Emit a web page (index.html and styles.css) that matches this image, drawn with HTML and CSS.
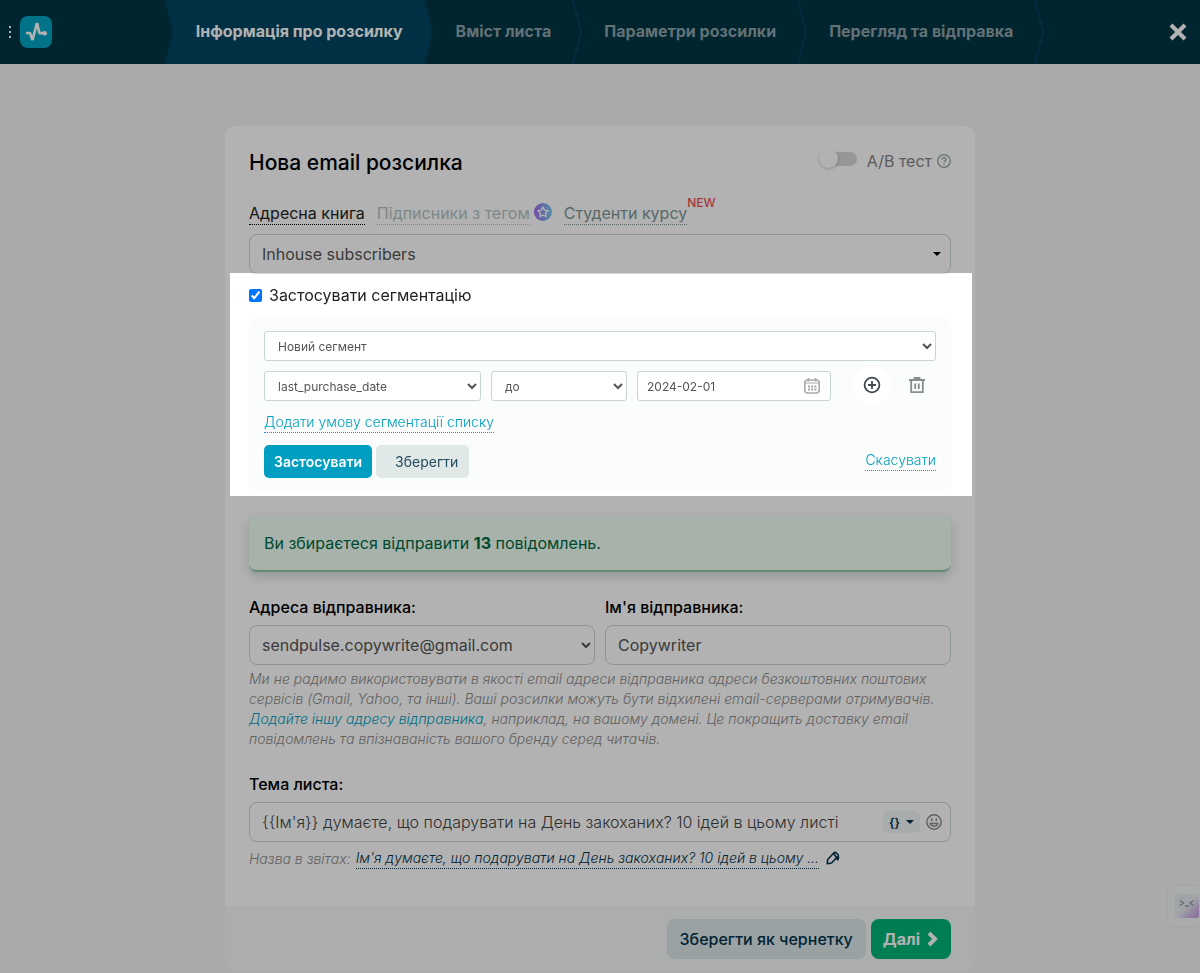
FILE: index.html
```html
<!DOCTYPE html>
<html lang="uk">
  <head>
    <meta charset="UTF-8" />
    <meta name="viewport" content="width=device-width, initial-scale=1.0" />
    <title>Нова email розсилка</title>
    <link rel="stylesheet" href="styles.css" />
  </head>
  <body>
    <header class="header">
      <div class="brand">
        <button class="dots" type="button" aria-label="Меню"><i></i><i></i><i></i></button>
        <a class="logo" href="#" aria-label="SendPulse">
          <svg width="32" height="32" viewBox="0 0 32 32" fill="none">
            <path d="M6 17h4l2.500 7 4.500-17 2.500 10.200h5" stroke="#fff" stroke-width="2.700" stroke-linejoin="bevel" />
            <circle cx="24.700" cy="17.200" r="2.300" fill="#fff" />
          </svg>
        </a>
      </div>
      <nav class="steps">
        <a class="step active" href="#">Інформація про розсилку</a>
        <a class="step" href="#">Вміст листа
          <svg class="arrow" viewBox="0 0 10 64" preserveAspectRatio="none"><path d="M1 0l8 32-8 32" /></svg></a>
        <a class="step" href="#">Параметри розсилки
          <svg class="arrow" viewBox="0 0 10 64" preserveAspectRatio="none"><path d="M1 0l8 32-8 32" /></svg></a>
        <a class="step" href="#">Перегляд та відправка
          <svg class="arrow" viewBox="0 0 10 64" preserveAspectRatio="none"><path d="M1 0l8 32-8 32" /></svg></a>
      </nav>
      <button class="close" type="button" aria-label="Закрити">
        <svg width="18" height="18" viewBox="0 0 18 18"><path d="M2 2l14 14M16 2L2 16" stroke="#fff" stroke-width="4.200" /></svg>
      </button>
    </header>

    <form class="card">
      <div class="content">
        <div class="top">
          <h1>Нова email розсилка</h1>
          <div class="ab">
            <input class="switch" type="checkbox" id="ab" />
            <label for="ab">A/B тест</label>
            <svg width="14" height="14" viewBox="0 0 14 14" fill="none" stroke="#97a3a3" stroke-width="1.300">
              <circle cx="7" cy="7" r="6.300" />
              <path d="M5 5.600c0-2.600 4-2.400 4-.2C9 6.900 7 6.800 7 8.300M7 9.400v1.400" />
            </svg>
          </div>
        </div>

        <div class="tabs">
          <a class="tab current" href="#">Адресна книга</a>
          <span class="tag-tab">
            <a class="tab disabled" href="#">Підписники з тегом</a>
            <svg width="18" height="18" viewBox="0 0 18 18">
              <defs>
                <linearGradient id="star"><stop stop-color="#a06cf0" /><stop offset="1" stop-color="#7ccbee" /></linearGradient>
              </defs>
              <circle cx="9" cy="9" r="9" fill="url(#star)" />
              <path d="M9 4l1.500 3.200 3.500.5-2.500 2.500.6 3.500L9 12l-3.100 1.700.6-3.500L4 7.700l3.500-.5z" fill="none" stroke="#fff" stroke-width="1.300" stroke-linejoin="round" />
            </svg>
          </span>
          <span class="course-tab"><a class="tab" href="#">Студенти курсу</a><sup class="new">NEW</sup></span>
        </div>

        <button class="field dropdown" type="button">Inhouse subscribers <span class="caret"></span></button>

        <section class="spotlight">
          <div class="check">
            <input type="checkbox" id="seg" checked />
            <label for="seg">Застосувати сегментацію</label>
          </div>
          <div class="segment">
            <select class="small" aria-label="Сегмент"><option>Новий сегмент</option></select>
            <div class="rule">
              <select class="small" aria-label="Змінна"><option>last_purchase_date</option></select>
              <select class="small" aria-label="Умова"><option>до</option></select>
              <div class="date">
                <input type="text" value="2024-02-01" aria-label="Дата" />
                <svg width="16" height="16" viewBox="0 0 16 16" fill="none" stroke="#aaa">
                  <rect x=".8" y="2" width="14.400" height="13" rx="3" stroke-width="1.600" />
                  <path d="M1 5h14" stroke-width="1" />
                  <path d="M4.500 0v3.500M11.500 0v3.500" stroke-width="1.600" />
                  <path d="M4 8.500h8.500M4 11.500h8.500" stroke-width="2" stroke-dasharray="2 1.200" />
                </svg>
              </div>
              <div class="actions">
                <button class="round" type="button" aria-label="Додати">
                  <svg width="18" height="18" viewBox="0 0 18 18" fill="none" stroke="#3d4b50" stroke-width="1.800">
                    <circle cx="9" cy="9" r="7.400" /><path d="M9 5v8M5 9h8" />
                  </svg>
                </button>
                <button class="round trash" type="button" aria-label="Видалити">
                  <svg width="16" height="16" viewBox="0 0 16 16" fill="none" stroke="#858f90" stroke-width="1.800">
                    <path d="M0 3h16M5.500 3V1h5v2M2.200 3v12.100h11.600V3M6.200 6.500v5.500M9.800 6.500v5.500" />
                  </svg>
                </button>
              </div>
            </div>
            <a class="link add" href="#">Додати умову сегментації списку</a>
            <div class="segment-buttons">
              <button class="apply" type="button">Застосувати</button>
              <button class="save" type="button">Зберегти</button>
              <a class="link cancel" href="#">Скасувати</a>
            </div>
          </div>
        </section>

        <div class="alert">Ви збираєтеся відправити <b>13</b> повідомлень.</div>

        <div class="sender">
          <div>
            <label class="title" for="email">Адреса відправника:</label>
            <select class="field" id="email"><option>sendpulse.copywrite@gmail.com</option></select>
          </div>
          <div>
            <label class="title" for="name">Ім'я відправника:</label>
            <input class="field" type="text" id="name" value="Copywriter" />
          </div>
        </div>
        <p class="help">
          Ми не радимо використовувати в якості email адреси відправника адреси безкоштовних поштових<br />
          сервісів (Gmail, Yahoo, та інші). Ваші розсилки можуть бути відхилені email-серверами отримувачів.<br />
          <a href="#">Додайте іншу адресу відправника</a>, наприклад, на вашому домені. Це покращить доставку email<br />
          повідомлень та впізнаваність вашого бренду серед читачів.
        </p>

        <div class="subject">
          <label class="title" for="subject">Тема листа:</label>
          <div class="field subject-box">
            <input type="text" id="subject" value="{{Ім'я}} думаєте, що подарувати на День закоханих? 10 ідей в цьому листі" />
            <button class="vars" type="button">{} <span class="caret"></span></button>
            <button class="emoji" type="button" aria-label="Емодзі">
              <svg width="16" height="16" viewBox="0 0 16 16" fill="none" stroke="#8a8a8a" stroke-width="1.400">
                <circle cx="8" cy="8" r="7.200" />
                <path d="M5.700 4.200v3M10.300 4.200v3M4.200 9.500h7.600c-.6 3.600-7 3.600-7.600 0z" />
              </svg>
            </button>
          </div>
        </div>
        <div class="report">
          <span>Назва в звітах:</span>
          <a href="#">Ім'я думаєте, що подарувати на День закоханих? 10 ідей в цьому ...</a>
          <svg width="14" height="14" viewBox="0 0 14 14" fill="none" stroke="#00344d" stroke-width="1.600" stroke-linejoin="round">
            <path d="M1.200 12.800l.5-4.300L8 1.800c1.300-1.300 5.300 2 4 3.600L5.500 12zM7.800 2.500l4 6.300 1-3" />
          </svg>
        </div>
      </div>

      <footer class="footer">
        <button class="draft" type="button">Зберегти як чернетку</button>
        <button class="next" type="submit">Далі
          <svg width="12" height="16" viewBox="0 0 12 16"><path d="M2 2l6 6-6 6" fill="none" stroke="#fff" stroke-width="4" /></svg>
        </button>
      </footer>
    </form>

    <button class="chat" type="button" aria-label="Чат">
      <svg width="24" height="24" viewBox="0 0 24 24">
        <defs>
          <linearGradient id="chat" x2="1" y2="1"><stop offset=".5" stop-color="#e6eaf0" /><stop offset="1" stop-color="#c093e0" /></linearGradient>
        </defs>
        <rect width="24" height="24" rx="3" fill="url(#chat)" />
        <path d="M5 6.500l3.500 2.500L5 11.500M18.500 6.500L15 9l3.500 2.500M10 12h4" fill="none" stroke="#929aa5" stroke-width="1.500" />
      </svg>
    </button>
  </body>
</html>
```

FILE: styles.css
```css
* {
  box-sizing: border-box;
  margin: 0;
  padding: 0;
}

body {
  min-height: 100vh;
  background-color: #f1f5f4;
  font-family: Inter, "Noto Sans", sans-serif;
  font-size: 16px;
  line-height: 24px;
  color: #000;
}

button,
input,
select {
  font-family: inherit;
}

button {
  border: none;
  background: none;
  cursor: pointer;
}

a {
  color: #009fc1;
  text-decoration: none;
}

svg {
  flex-shrink: 0;
}

/* header */
.header {
  display: grid;
  grid-template-columns: 1fr auto 1fr;
  align-items: center;
  height: 64px;
  background-color: #003543;
}

.brand {
  display: flex;
  align-items: center;
  padding-left: 8px;
  gap: 8px;
}

.dots {
  display: flex;
  flex-direction: column;
  align-items: center;
  gap: 3px;
  width: 4px;
}

.dots i {
  width: 2px;
  height: 2px;
  background-color: #fff;
}

.logo {
  display: flex;
  border-radius: 8px;
  background-color: #00a5c4;
}

.steps {
  display: flex;
  height: 64px;
}

.step {
  position: relative;
  display: flex;
  align-items: center;
  padding: 0 22px 2px 31px;
  font-weight: 700;
  color: #8fa3aa;
}

.step.active {
  margin-right: -8px;
  padding-right: 30px;
  background-color: #004561;
  color: #fff;
  clip-path: polygon(0 0, calc(100% - 8px) 0, 100% 50%, calc(100% - 8px) 100%, 0 100%, 8px 50%);
}

.arrow {
  position: absolute;
  top: 0;
  right: -9px;
  width: 10px;
  height: 100%;
  fill: none;
  stroke: #004561;
  stroke-width: 1.5;
}

.close {
  display: flex;
  justify-self: end;
  margin-right: 13px;
}

/* card */
.card {
  width: 100%;
  max-width: 750px;
  margin: 62px auto 0;
  border-radius: 10px;
  background-color: #fff;
}

.content {
  padding: 24px 24px 37px;
}

.top {
  display: flex;
  justify-content: space-between;
  margin-bottom: 25px;
}

h1 {
  font-size: 21px;
  font-weight: 500;
  line-height: 26px;
}

.ab {
  display: flex;
  align-items: center;
  gap: 5px;
  height: 22px;
  color: #858585;
}

.switch {
  appearance: none;
  width: 38px;
  height: 14px;
  margin: 0 5px 4px 0;
  border-radius: 7px;
  background-color: #d8d8d8;
}

.switch::before {
  content: "";
  display: block;
  width: 19px;
  height: 19px;
  margin-top: -3px;
  border-radius: 50%;
  background-color: #fff;
  box-shadow: 0 1px 3px rgba(0, 0, 0, 0.2);
}

.tabs {
  display: flex;
  gap: 12px;
  height: 24px;
  margin-bottom: 9px;
}

.tab {
  display: block;
  height: 24px;
  border-bottom: 1px dotted #7f9696;
  color: #7f9696;
}

.tab.current {
  border-color: #000;
  color: #222;
}

.tab.disabled {
  border-color: #b3c4c4;
  color: #b3c4c4;
}

.tag-tab,
.course-tab {
  display: flex;
  gap: 4px;
}

.tag-tab svg {
  margin-top: 2px;
}

.course-tab {
  gap: 0;
}

.new {
  font-size: 12px;
  font-weight: 500;
  line-height: 4px;
  color: #ef5350;
}

.field {
  display: block;
  width: 100%;
  height: 40px;
  padding: 0 12px;
  border: 1px solid #c9d4d4;
  border-radius: 8px;
  background-color: #fff;
  font-size: 16px;
  color: #555;
}

select.field {
  padding: 0 0 0 8px;
}

.dropdown {
  display: flex;
  align-items: center;
  justify-content: space-between;
  padding-right: 9px;
}

.caret {
  border: 4px solid transparent;
  border-top-color: #000;
  border-bottom: none;
}

/* everything outside of this block is dimmed */
.spotlight {
  position: relative;
  z-index: 10;
  margin: -1px -21px 0 -19px;
  padding: 10px 21px 3px 19px;
  box-shadow: 0 0 0 2000px rgba(0, 0, 0, 0.3);
}

.check {
  display: flex;
  align-items: center;
  gap: 7px;
  margin-bottom: 9px;
  color: #222;
}

.check input {
  width: 13px;
  height: 13px;
  accent-color: #0075ff;
}

.segment {
  padding: 15px;
  border-radius: 10px;
  background-color: #fbfdfc;
}

.small {
  display: block;
  width: 100%;
  height: 30px;
  padding-left: 9px;
  border: 1px solid #c9d4d4;
  border-radius: 3px;
  background-color: #fff;
  font-size: 12px;
  color: #555;
}

.rule {
  display: grid;
  grid-template-columns: minmax(0, 217fr) minmax(0, 136fr) minmax(0, 194fr) 95px;
  gap: 10px;
  margin: 10px 0;
}

.date {
  display: flex;
  align-items: center;
  height: 30px;
  padding: 0 10px 0 9px;
  border: 1px solid #c9d4d4;
  border-radius: 3px;
  background-color: #fff;
}

.date input {
  flex: 1;
  min-width: 0;
  border: none;
  background: none;
  font-size: 12px;
  color: #555;
}

.actions {
  display: flex;
  align-items: center;
  justify-content: flex-end;
  gap: 7px;
  height: 28px;
}

.round {
  display: flex;
  align-items: center;
  justify-content: center;
  flex-shrink: 0;
  width: 38px;
  height: 38px;
  border-radius: 50%;
  background-color: #fff;
}

.round.trash {
  background: none;
}

.link {
  border-bottom: 1px dotted #009fc1;
  font-size: 14px;
  font-weight: 300;
  line-height: 21px;
}

.add {
  display: block;
  width: fit-content;
  margin-bottom: 12px;
}

.segment-buttons {
  display: flex;
  align-items: center;
  gap: 4px;
}

.apply,
.save {
  height: 33px;
  border-radius: 5px;
  font-size: 14px;
}

.apply {
  padding: 0 10px;
  background-color: #009fc1;
  font-weight: 600;
  color: #fff;
}

.save {
  padding: 0 11px 0 19px;
  background-color: #e0e8e8;
  color: #264b5c;
}

.cancel {
  align-self: flex-start;
  margin: 4px 0 0 auto;
}

.alert {
  margin: 20px 0 23px;
  padding: 15px;
  border-bottom: 2px solid #90c4a8;
  border-radius: 8px;
  background-color: #f0fff4;
  box-shadow: 0 4px 12px rgba(0, 60, 50, 0.2);
  color: #00693f;
}

.sender {
  display: grid;
  grid-template-columns: 1fr 1fr;
  gap: 10px;
}

.title {
  display: block;
  margin-bottom: 6px;
  font-weight: 500;
}

.help {
  margin: 4px 0 23px;
  font-size: 14px;
  font-style: italic;
  font-weight: 300;
  line-height: 20px;
  color: #8c8c8c;
}

.subject-box {
  display: flex;
  align-items: center;
  padding-right: 8px;
}

.subject-box input {
  flex: 1;
  min-width: 0;
  border: none;
  background: none;
  font-size: 16px;
  font-weight: 300;
  color: #444;
}

.vars {
  display: flex;
  align-items: center;
  gap: 6px;
  height: 22px;
  margin-right: 6px;
  padding: 0 6px;
  border-radius: 5px;
  background-color: #f1f5f5;
  font-size: 12px;
  font-weight: 600;
  color: #00344d;
}

.vars .caret {
  border-top-color: #00344d;
}

.emoji {
  display: flex;
}

.report {
  display: flex;
  align-items: center;
  margin-top: 5px;
  font-size: 14px;
  font-style: italic;
  font-weight: 300;
  line-height: 21px;
  color: #8c8c8c;
}

.report a {
  margin: 0 7px 0 5px;
  border-bottom: 1px dotted #00344d;
  color: #00344d;
}

.footer {
  display: flex;
  justify-content: flex-end;
  gap: 5px;
  padding: 13px 24px 12px;
  border-radius: 0 0 10px 10px;
  background-color: #f6f9f8;
}

.draft,
.next {
  height: 40px;
  border-radius: 8px;
  font-size: 16px;
}

.draft {
  padding: 0 13px;
  background-color: #dde7e9;
  font-weight: 500;
  color: #00344d;
}

.next {
  display: flex;
  align-items: center;
  gap: 7px;
  padding: 0 12px;
  background-color: #00b578;
  font-weight: 700;
  color: #fff;
}

.chat {
  position: fixed;
  right: 0;
  bottom: 47px;
  display: flex;
  padding: 8px 1px 8px 7px;
  border-radius: 4px 0 0 4px;
  background-color: #f3f6f5;
  box-shadow: 0 0 3px rgba(0, 0, 0, 0.06);
}
```
